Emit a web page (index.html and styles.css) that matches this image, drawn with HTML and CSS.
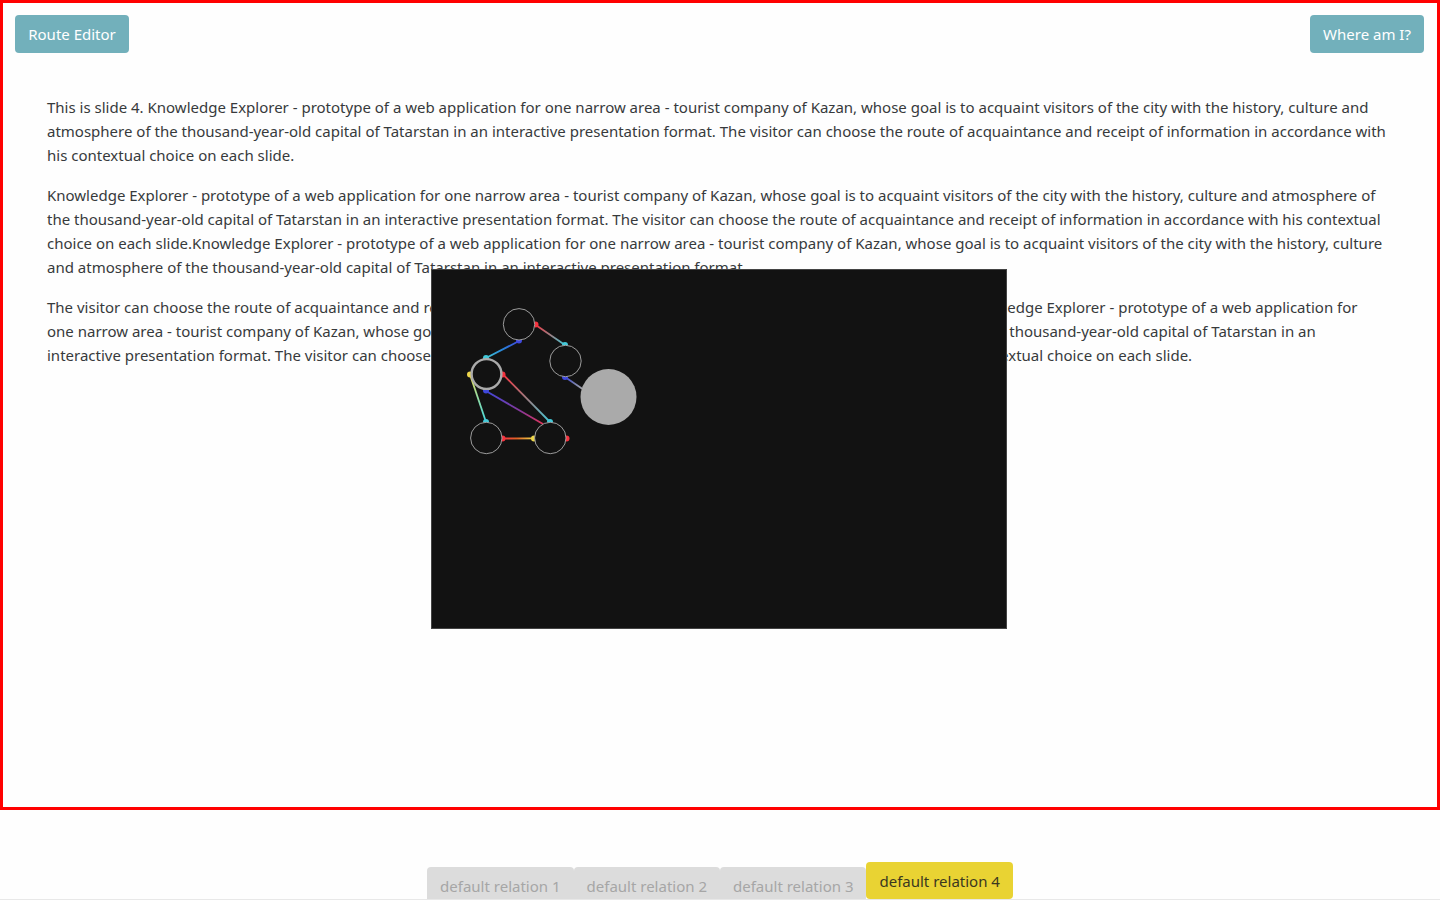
FILE: index.html
```html
<!DOCTYPE html>
<html lang="en">
<head>
<meta charset="utf-8">
<meta name="viewport" content="width=device-width, initial-scale=1">
<title>Knowledge Explorer</title>
<link rel="stylesheet" href="styles.css">
</head>
<body>
<main class="slide">
  <header class="toolbar">
    <button class="btn btn-info" type="button">Route Editor</button>
    <button class="btn btn-info" type="button">Where am I?</button>
  </header>
  <article class="content">
    <p>This is slide 4. Knowledge Explorer - prototype of a web application for one narrow area - tourist company of Kazan, whose goal is to acquaint visitors of the city with the history, culture and<br>
    atmosphere of the thousand-year-old capital of Tatarstan in an interactive presentation format. The visitor can choose the route of acquaintance and receipt of information in accordance with<br>
    his contextual choice on each slide.</p>
    <p>Knowledge Explorer - prototype of a web application for one narrow area - tourist company of Kazan, whose goal is to acquaint visitors of the city with the history, culture and atmosphere of<br>
    the thousand-year-old capital of Tatarstan in an interactive presentation format. The visitor can choose the route of acquaintance and receipt of information in accordance with his contextual<br>
    choice on each slide.Knowledge Explorer - prototype of a web application for one narrow area - tourist company of Kazan, whose goal is to acquaint visitors of the city with the history, culture<br>
    and atmosphere of the thousand-year-old capital of Tatarstan in an interactive presentation format.</p>
    <p>The visitor can choose the route of acquaintance and receipt of information in accordance with his contextual choice on each slide.Knowledge Explorer - prototype of a web application for<br>
    one narrow area - tourist company of Kazan, whose goal is to acquaint visitors of the city with the history, culture and atmosphere of the thousand-year-old capital of Tatarstan in an<br>
    interactive presentation format. The visitor can choose the route of acquaintance and receipt of information in accordance with his contextual choice on each slide.</p>
  </article>
</main>
<section class="map" aria-label="Route map">
  <svg class="graph" viewBox="0 0 576 360" preserveAspectRatio="xMinYMin meet" aria-hidden="true">
    <defs>
      <linearGradient id="g1" gradientUnits="userSpaceOnUse" x1="88" y1="72" x2="55" y2="89"><stop stop-color="#3f48dc"/><stop offset=".5" stop-color="#2784d8"/><stop offset="1" stop-color="#43c9d8"/></linearGradient>
      <linearGradient id="g2" gradientUnits="userSpaceOnUse" x1="104" y1="55" x2="134" y2="76"><stop stop-color="#f5333f"/><stop offset=".55" stop-color="#97858a"/><stop offset="1" stop-color="#43c9d8"/></linearGradient>
      <linearGradient id="g3" gradientUnits="userSpaceOnUse" x1="134" y1="108" x2="152" y2="120"><stop stop-color="#3f48dc"/><stop offset=".5" stop-color="#7078b0"/><stop offset="1" stop-color="#aaa"/></linearGradient>
      <linearGradient id="g4" gradientUnits="userSpaceOnUse" x1="39" y1="105" x2="55" y2="153"><stop stop-color="#f2dc4d"/><stop offset=".4" stop-color="#a3dc96"/><stop offset="1" stop-color="#43d9e0"/></linearGradient>
      <linearGradient id="g5" gradientUnits="userSpaceOnUse" x1="55" y1="122" x2="112" y2="155"><stop stop-color="#3f48dc"/><stop offset=".6" stop-color="#87389a"/><stop offset="1" stop-color="#e0345a"/></linearGradient>
      <linearGradient id="g6" gradientUnits="userSpaceOnUse" x1="72" y1="105" x2="119" y2="153"><stop stop-color="#f5333f"/><stop offset=".5" stop-color="#a07c80"/><stop offset="1" stop-color="#43c9d8"/></linearGradient>
      <linearGradient id="g7" gradientUnits="userSpaceOnUse" x1="72" y1="0" x2="103" y2="0"><stop stop-color="#f5333f"/><stop offset=".45" stop-color="#e06425"/><stop offset="1" stop-color="#f2dc4d"/></linearGradient>
    </defs>
    <g fill="none" stroke-width="1.8">
      <path stroke="url(#g1)" d="M88 72L55 89"/>
      <path stroke="url(#g2)" d="M104 55.500L134 76"/>
      <path stroke="url(#g3)" d="M134 108L156 123"/>
      <path stroke="url(#g4)" d="M39 105.500L55 153"/>
      <path stroke="url(#g5)" d="M55 122L112 155"/>
      <path stroke="url(#g6)" d="M72 105.500L119 153"/>
      <path stroke="url(#g7)" d="M72 169.500L103 169.400"/>
    </g>
    <g fill="#f5333f"><circle cx="104.500" cy="55.500" r="3"/><circle cx="71.500" cy="105.500" r="3"/><circle cx="71.500" cy="169.500" r="3"/><circle cx="135.500" cy="169.500" r="3"/></g>
    <g fill="#3f48dc"><circle cx="88" cy="71.500" r="3"/><circle cx="134" cy="108" r="3"/><circle cx="55" cy="121.500" r="3"/></g>
    <g fill="#43c9d8"><circle cx="55" cy="89" r="3"/><circle cx="134" cy="76" r="3"/><circle cx="55" cy="153" r="3"/><circle cx="119" cy="153" r="3"/></g>
    <g fill="#ecd54b"><circle cx="39" cy="105.500" r="3"/><circle cx="103" cy="169.500" r="3"/></g>
    <g fill="#121212" stroke="#aaa" stroke-width=".9">
      <circle cx="88" cy="55.300" r="15.700"/>
      <circle cx="134.500" cy="92" r="15.700"/>
      <circle cx="55.300" cy="169" r="15.700"/>
      <circle cx="119.300" cy="169" r="15.700"/>
      <circle cx="55.500" cy="105" r="14.900" stroke-width="2.400"/>
    </g>
    <circle cx="177.500" cy="128" r="28" fill="#aaa"/>
  </svg>
</section>
<nav class="relations" aria-label="Relations">
  <button class="btn relation" type="button">default relation 1</button>
  <button class="btn relation" type="button">default relation 2</button>
  <button class="btn relation" type="button">default relation 3</button>
  <button class="btn relation active" type="button">default relation 4</button>
</nav>
</body>
</html>
```
FILE: styles.css
```css
* {
  box-sizing: border-box;
}

body {
  margin: 0;
  height: 100vh;
  display: flex;
  flex-direction: column;
  overflow: hidden;
  background: #fefefe;
  color: #373a3c;
  font-family: "Segoe UI", "Noto Sans", sans-serif;
  font-size: 15px;
  line-height: 24px;
}

.slide {
  flex: 0 0 90vh;
  border: 3px solid #f00;
  padding: 12px 13px 0 12px;
}

.toolbar {
  display: flex;
  justify-content: space-between;
}

.btn {
  border: 0;
  border-radius: 4px;
  padding: 7px 13px;
  font: inherit;
  white-space: nowrap;
  cursor: pointer;
}

.btn-info {
  min-width: 114px;
  background: #72b0bb;
  color: #fff;
}

.content {
  padding: 42px 32px 0;
  white-space: nowrap;
}

.content p {
  margin: 0 0 16px;
}

.map {
  position: absolute;
  top: 50%;
  left: 50%;
  width: 40vw;
  height: 40vh;
  transform: translate(-50%, -50%);
  margin-top: -1px;
  margin-left: -1px;
  background: #121212;
  box-shadow: inset 0 0 0 1px #444;
  overflow: hidden;
}

.graph {
  display: block;
  width: 100%;
}

.relations {
  flex: 1;
  display: flex;
  justify-content: center;
  align-items: flex-end;
  overflow: hidden;
  border-bottom: 1px solid #e8e8e8;
}

.relation {
  min-width: 146px;
  margin-bottom: -5px;
  padding-bottom: 6px;
  background: #dcdcdc;
  color: #a6a6a6;
}

.relation.active {
  margin-bottom: 0;
  background: #e9d333;
  color: #3b3820;
}
```
